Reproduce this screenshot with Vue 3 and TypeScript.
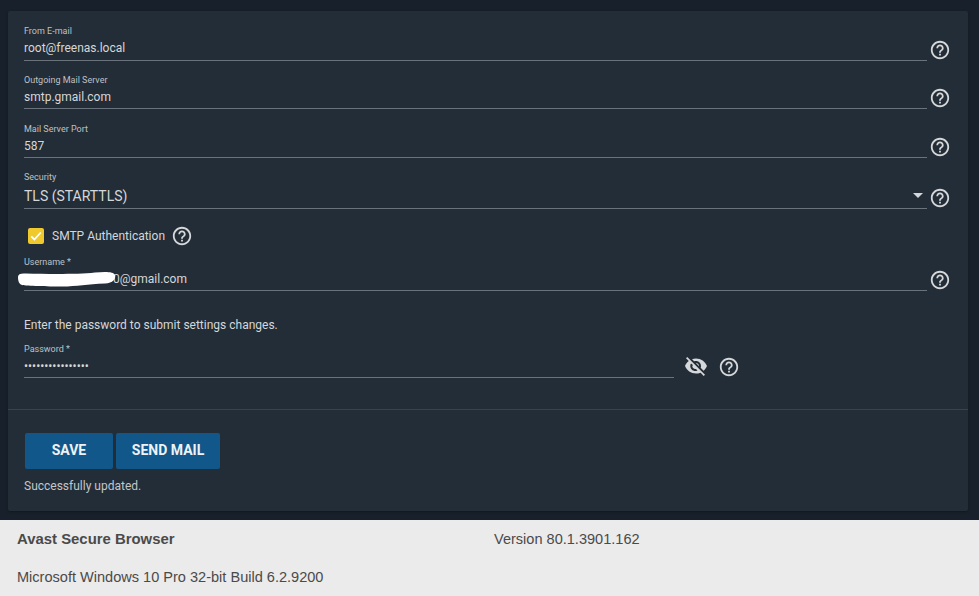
<script setup lang="ts">
interface Field {
  label: string
  value: string
}
const fields: Field[] = [
  { label: 'From E-mail', value: 'root@freenas.local' },
  { label: 'Outgoing Mail Server', value: 'smtp.gmail.com' },
  { label: 'Mail Server Port', value: '587' },
]
</script>

<template>
  <div class="page">
    <main class="stage">
      <section class="card">
        <form class="form" @submit.prevent>
          <div v-for="f in fields" :key="f.label" class="row">
            <div class="field">
              <div class="label">{{ f.label }}</div>
              <div class="value">{{ f.value }}</div>
            </div>
            <svg class="help" viewBox="0 0 24 24"><path d="M11 18h2v-2h-2v2zm1-16C6.48 2 2 6.48 2 12s4.480 10 10 10 10-4.480 10-10S17.520 2 12 2zm0 18c-4.410 0-8-3.590-8-8s3.590-8 8-8 8 3.590 8 8-3.590 8-8 8zm0-14c-2.210 0-4 1.790-4 4h2c0-1.100.9-2 2-2s2 .9 2 2c0 2-3 1.750-3 5h2c0-2.250 3-2.500 3-5 0-2.210-1.790-4-4-4z"/></svg>
          </div>

          <div class="row row-select">
            <div class="field">
              <div class="label">Security</div>
              <div class="value value-select">
                <span>TLS (STARTTLS)</span>
                <i class="caret"></i>
              </div>
            </div>
            <svg class="help" viewBox="0 0 24 24"><path d="M11 18h2v-2h-2v2zm1-16C6.48 2 2 6.48 2 12s4.480 10 10 10 10-4.480 10-10S17.520 2 12 2zm0 18c-4.410 0-8-3.590-8-8s3.590-8 8-8 8 3.590 8 8-3.590 8-8 8zm0-14c-2.210 0-4 1.790-4 4h2c0-1.100.9-2 2-2s2 .9 2 2c0 2-3 1.750-3 5h2c0-2.250 3-2.500 3-5 0-2.210-1.790-4-4-4z"/></svg>
          </div>

          <div class="check-row">
            <span class="box">
              <svg viewBox="0 0 16 16"><path d="M3.200 8.300l3.200 3.200 6.400-7" fill="none" stroke="#fff" stroke-width="1.800"/></svg>
            </span>
            <span class="check-label">SMTP Authentication</span>
            <svg class="help" viewBox="0 0 24 24"><path d="M11 18h2v-2h-2v2zm1-16C6.48 2 2 6.48 2 12s4.480 10 10 10 10-4.480 10-10S17.520 2 12 2zm0 18c-4.410 0-8-3.590-8-8s3.590-8 8-8 8 3.590 8 8-3.590 8-8 8zm0-14c-2.210 0-4 1.790-4 4h2c0-1.100.9-2 2-2s2 .9 2 2c0 2-3 1.750-3 5h2c0-2.250 3-2.500 3-5 0-2.210-1.790-4-4-4z"/></svg>
          </div>

          <div class="row row-user">
            <div class="field">
              <div class="label">Username *</div>
              <div class="value value-user">
                <svg class="redaction" viewBox="0 0 100 16"><path d="M1 6C1 3 4 2 9 2.500C30 3 60 3.500 78 1.500C88 .5 97 .5 98 4C99 8 96 12 88 12.500C70 13 60 15.500 45 15.500C30 15.500 10 15 5 14C2 13 1 10 1 6z"/></svg>
                <span class="user-text">0@gmail.com</span>
              </div>
            </div>
            <svg class="help" viewBox="0 0 24 24"><path d="M11 18h2v-2h-2v2zm1-16C6.48 2 2 6.48 2 12s4.480 10 10 10 10-4.480 10-10S17.520 2 12 2zm0 18c-4.410 0-8-3.590-8-8s3.590-8 8-8 8 3.590 8 8-3.590 8-8 8zm0-14c-2.210 0-4 1.790-4 4h2c0-1.100.9-2 2-2s2 .9 2 2c0 2-3 1.750-3 5h2c0-2.250 3-2.500 3-5 0-2.210-1.790-4-4-4z"/></svg>
          </div>

          <p class="hint">Enter the password to submit settings changes.</p>

          <div class="row row-pass">
            <div class="field field-pass">
              <div class="label">Password *</div>
              <div class="value value-pass">••••••••••••••••</div>
            </div>
            <svg class="eye" viewBox="0 0 24 24"><path d="M12 7c2.760 0 5 2.240 5 5 0 .65-.13 1.260-.36 1.830l2.920 2.920c1.510-1.260 2.700-2.890 3.430-4.750-1.730-4.390-6-7.500-11-7.500-1.400 0-2.740.25-3.980.7l2.160 2.160C10.740 7.130 11.350 7 12 7zM2 4.270l2.280 2.280.46.46C3.080 8.300 1.780 10.020 1 12c1.730 4.390 6 7.500 11 7.500 1.550 0 3.030-.3 4.380-.84l.42.42L19.730 22 21 20.730 3.270 3 2 4.270zM7.530 9.800l1.550 1.550c-.05.21-.8.43-.8.650 0 1.660 1.340 3 3 3 .22 0 .44-.03.65-.08l1.550 1.550c-.67.33-1.410.53-2.200.53-2.760 0-5-2.240-5-5 0-.79.2-1.530.53-2.200zm4.310-.78l3.150 3.150.02-.16c0-1.660-1.340-3-3-3l-.17.010z"/></svg>
            <svg class="help help-pass" viewBox="0 0 24 24"><path d="M11 18h2v-2h-2v2zm1-16C6.48 2 2 6.48 2 12s4.480 10 10 10 10-4.480 10-10S17.520 2 12 2zm0 18c-4.410 0-8-3.590-8-8s3.590-8 8-8 8 3.590 8 8-3.590 8-8 8zm0-14c-2.210 0-4 1.790-4 4h2c0-1.100.9-2 2-2s2 .9 2 2c0 2-3 1.750-3 5h2c0-2.250 3-2.500 3-5 0-2.210-1.790-4-4-4z"/></svg>
          </div>
        </form>

        <div class="actions">
          <div class="buttons">
            <button class="btn btn-save" type="button">SAVE</button>
            <button class="btn btn-send" type="button">SEND MAIL</button>
          </div>
          <p class="status">Successfully updated.</p>
        </div>
      </section>
    </main>

    <footer class="about">
      <div class="about-top">
        <strong class="browser">Avast Secure Browser</strong>
        <span class="version">Version 80.1.3901.162</span>
      </div>
      <div class="os">Microsoft Windows 10 Pro 32-bit Build 6.2.9200</div>
    </footer>
  </div>
</template>

<style scoped>
.page {
  width: 979px;
  height: 596px;
  overflow: hidden;
  display: flex;
  flex-direction: column;
  font-family: Roboto, "Liberation Sans", sans-serif;
  background: #ebebeb;
}
.stage {
  height: 520px;
  box-sizing: border-box;
  padding: 11px 11px 9px 8px;
  background: #18212b;
}
.card {
  height: 500px;
  background: #232d37;
  border-radius: 2px;
  box-shadow: 0 1px 3px rgba(0, 0, 0, 0.35);
  display: flex;
  flex-direction: column;
}
.form {
  height: 399px;
  box-sizing: border-box;
  padding: 1px 0 0 16px;
  border-bottom: 1px solid #3a434d;
}
.row {
  display: flex;
  align-items: flex-end;
  height: 48.5px;
}
.row-select {
  height: 51px;
}
.field {
  width: 903px;
  border-bottom: 1px solid #6a737c;
  box-sizing: border-box;
  height: 35px;
}
.row:first-child .field {
  height: 35.500px;
}
.row-select .field {
  height: 38px;
}
.label {
  font-size: 9px;
  line-height: 13px;
  color: #bdc1c5;
}
.value {
  font-size: 12px;
  line-height: 21px;
  color: #d5d7d9;
}
.value-select {
  display: flex;
  justify-content: space-between;
  align-items: center;
  padding-top: 2px;
  font-size: 14px;
}
.caret {
  width: 0;
  height: 0;
  margin: 0 4px 2px 0;
  border-left: 5px solid transparent;
  border-right: 5px solid transparent;
  border-top: 5px solid #d5d7d9;
}
.help {
  width: 22px;
  height: 22px;
  fill: #d5d7d9;
  margin: 0 0 0 2px;
  flex: none;
}
.check-row {
  display: flex;
  align-items: center;
  height: 26px;
  margin-top: 14px;
  padding-left: 4px;
}
.box {
  width: 16px;
  height: 16px;
  background: #f0c92d;
  border-radius: 2px;
  display: block;
}
.box svg {
  display: block;
  width: 16px;
  height: 16px;
}
.check-label {
  margin-left: 8px;
  font-size: 12px;
  color: #d5d7d9;
}
.check-row .help {
  margin: 0 0 0 6px;
}
.row-user {
  height: 42px;
}
.row-user .field {
  height: 34.500px;
}
.value-user {
  position: relative;
  padding-left: 89px;
}
.redaction {
  position: absolute;
  left: -7px;
  top: 2px;
  width: 100px;
  height: 16px;
  fill: #fff;
}
.hint {
  margin: 26px 0 0;
  font-size: 12px;
  line-height: 16px;
  color: #d5d7d9;
}
.row-pass {
  height: 45px;
}
.row-pass .field-pass {
  width: 650px;
  height: 34.500px;
}
.value-pass {
  font-size: 12px;
}
.eye {
  width: 24px;
  height: 24px;
  fill: #d5d7d9;
  margin: 0 0 0 10px;
  flex: none;
}
.row-pass .help-pass {
  margin: 0 0 0 10px;
}
.actions {
  padding: 23px 0 0 17px;
}
.buttons {
  display: flex;
  gap: 3px;
}
.btn {
  height: 36px;
  border: 0;
  border-radius: 2px;
  background: #11578a;
  color: #eef2f5;
  font: 700 14px Roboto, "Liberation Sans", sans-serif;
  padding: 0 0 2px;
}
.btn-save {
  width: 88px;
}
.btn-send {
  width: 104px;
}
.status {
  margin: 9px 0 0 -1px;
  font-size: 12px;
  line-height: 16px;
  color: #c3c6c9;
}
.about {
  flex: 1;
  padding-left: 17px;
  font-family: "Liberation Sans", Arial, sans-serif;
  font-size: 14.560px;
  color: #4a4a4a;
}
.about-top {
  display: flex;
  padding-top: 11px;
  line-height: 16px;
}
.browser {
  width: 477px;
  font-size: 14.900px;
}
.os {
  margin-top: 22px;
  line-height: 16px;
}
</style>
